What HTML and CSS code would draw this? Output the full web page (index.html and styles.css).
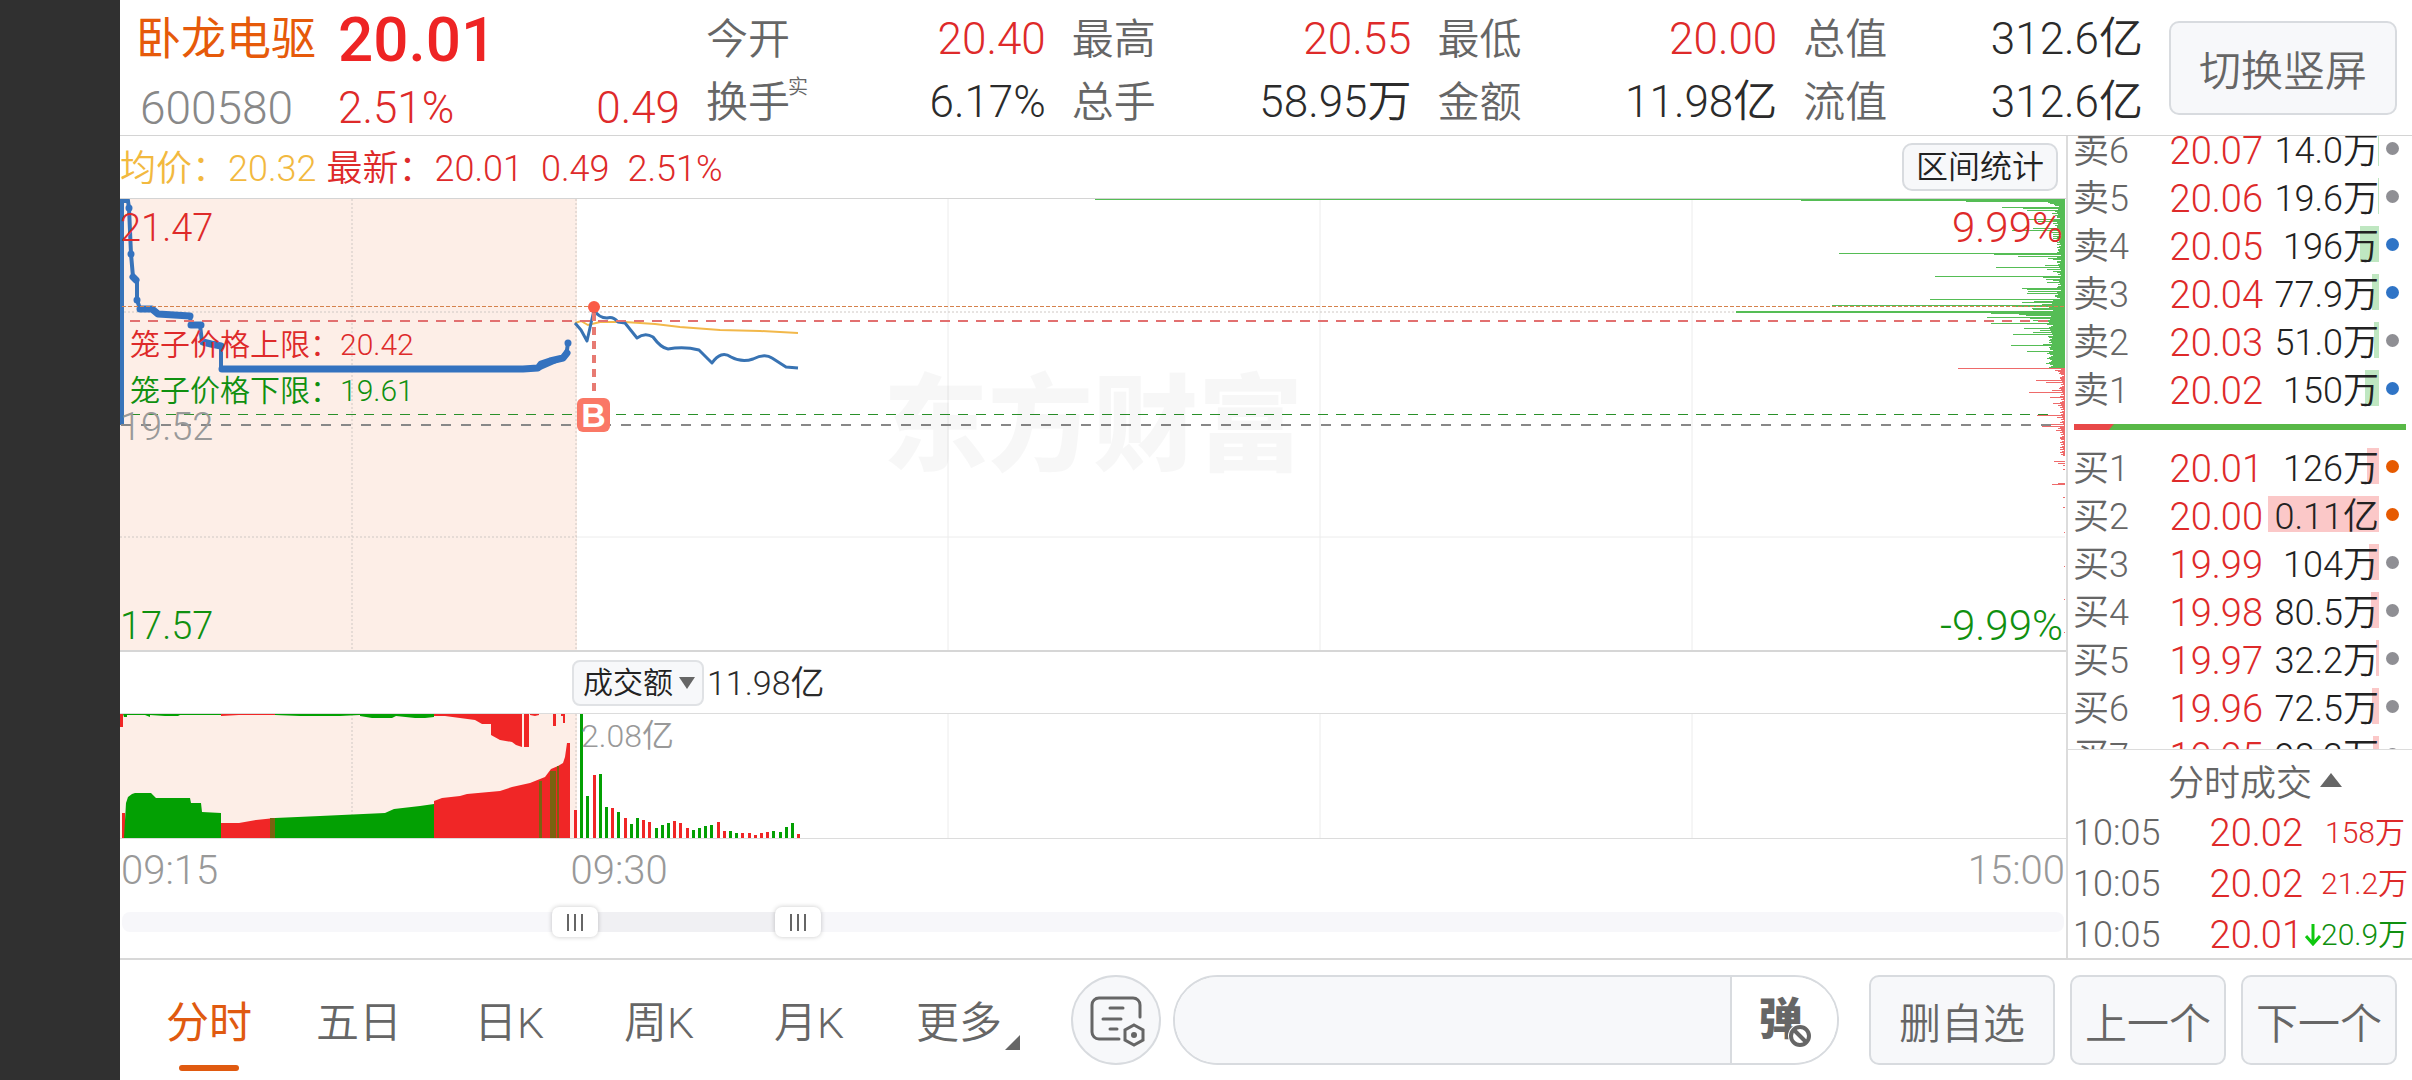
FILE: index.html
```html
<!DOCTYPE html>
<html lang="zh-CN">
<head>
<meta charset="utf-8">
<meta name="viewport" content="width=device-width, initial-scale=1">
<title>卧龙电驱 600580</title>
<link rel="stylesheet" href="styles.css">
</head>
<body>
<div class="app">
  <header class="header">
    <div class="quote">
      <h1 class="quote-name">卧龙电驱</h1>
      <strong class="quote-price">20.01</strong>
      <span class="quote-code">600580</span>
      <span class="quote-change"><span>2.51%</span><span>0.49</span></span>
    </div>
    <dl class="stats">
      <div class="stat"><dt>今开</dt><dd class="up">20.40</dd></div>
      <div class="stat"><dt>最高</dt><dd class="up">20.55</dd></div>
      <div class="stat"><dt>最低</dt><dd class="up">20.00</dd></div>
      <div class="stat"><dt>总值</dt><dd>312.6亿</dd></div>
      <div class="stat"><dt>换手<sup>实</sup></dt><dd>6.17%</dd></div>
      <div class="stat"><dt>总手</dt><dd>58.95万</dd></div>
      <div class="stat"><dt>金额</dt><dd>11.98亿</dd></div>
      <div class="stat"><dt>流值</dt><dd>312.6亿</dd></div>
    </dl>
    <button class="btn btn-rotate" type="button">切换竖屏</button>
  </header>

  <div class="content">
    <main class="charts">
      <div class="legend">
        <span class="avg">均价：20.32</span>
        <span class="up">最新：20.01</span>
        <span class="up gap">0.49</span>
        <span class="up gap">2.51%</span>
        <button class="btn btn-range" type="button">区间统计</button>
      </div>

      <section class="price-chart" aria-label="分时走势">
        <div class="watermark" aria-hidden="true">东方财富</div>
        <span class="trade-mark">B</span>
        <svg class="plot" viewBox="120 199 1946 451" preserveAspectRatio="none" aria-hidden="true">
          <rect class="auction" x="120" y="199" width="457" height="451"/>
          <path class="grid-solid" d="M948 199V650M1320 199V650M1692 199V650M577 537H2065"/>
          <path class="grid-dot" d="M352 199V650M576 199V650M120 312H2065M120 537H577"/>
          <path class="line-avg" d="M575 323L581 321L588 325L600 322L625 322L655 324L680 327L720 330L760 331L798 333"/>
          <path class="line-price" d="M575 323L581 330L587 341L594 310Q599 318 607 318Q613 316 618 322L625 323L637 338Q645 332 653 337Q661 348 668 349Q684 346 699 350L712 363Q721 350 731 357Q742 363 753 359Q765 353 772 358L786 367L798 368"/>
          <path class="auction-line" d="M122 425V201H128L129 208L131 254L133 277L137 280V300L140 309L152 309L158 314L190 316L191 325H200L202 342L221 346V369H538L563 358L567 350L568 343"/>
          <path class="auction-dots" d="M129 208h0M131 254h0M133 277l3 3M137 300h0M140 309h12l6 5l32 2M191 325h10M203 342l8 2l10 2M222 369H523L538 368L541 364L550 361L563 358L567 353M568 343h0"/>
          <g id="depth"></g>
          <path class="dash-hold" d="M122 306.5H2065"/>
          <path class="dash-upper" d="M130 321H2048"/>
          <path class="dash-lower" d="M130 414.5H2048"/>
          <path class="dash-close" d="M121 425H2051"/>
          <path class="dash-mark" d="M594 313V397"/>
          <circle class="mark-dot" cx="594" cy="307" r="6"/>
        </svg>
        <span class="axis axis-top up">21.47</span>
        <span class="axis axis-mid">19.52</span>
        <span class="axis axis-bottom down">17.57</span>
        <span class="axis axis-top axis-right up">9.99%</span>
        <span class="axis axis-bottom axis-right down">-9.99%</span>
        <span class="cage cage-upper up">笼子价格上限：20.42</span>
        <span class="cage cage-lower down">笼子价格下限：19.61</span>
      </section>

      <div class="volume-head">
        <div class="volume-tools">
          <label class="picker"><select aria-label="指标"><option>成交额</option></select></label>
          <span class="volume-total">11.98亿</span>
        </div>
      </div>

      <section class="volume-chart" aria-label="成交额">
        <svg class="plot" viewBox="120 714 1946 124" preserveAspectRatio="none" aria-hidden="true">
          <rect class="auction" x="120" y="714" width="457" height="124"/>
          <path class="grid-solid" d="M948 714V838M1320 714V838M1692 714V838"/>
          <path class="grid-dot" d="M352 714V838M576 714V838"/>
          <path class="vol-up" d="M120 714h3v13h-3zM221 714H275V715H239L221 716zM434 714H524V747H522L516 745L512 742L500 740L491 735V724H482L475 720L460 718L445 716H434zM524 714h5v33h-5zM530 714h9v1l-4 1l-5 -1zM553 714h3v12h-3zM561 714h4v9h-2v-7h-2z"/>
          <path class="vol-down" d="M123 714H221V715H180L178 716H165L150 715V717L145 715H127V717H124zM275 714H434V717L425 718H415L396 716L392 718H372L360 716V715L340 716H300L275 715z"/>
          <path class="vol-gap" d="M522 714h2v34h-2z"/>
          <path class="vol-up" d="M122 813h3v25h-3zM221 838V823H239L256 820L275 818V838zM434 838V801L442 798L460 796L467 794L500 791L512 787L530 783L545 777L551 769L558 766L563 763L565 757L567 743H570V838z"/>
          <path class="vol-down" d="M124 838L126 803L128 797L132 794L135 793H151L156 798H190L191 803H201L202 812L221 813V838zM275 838V818L320 816L385 813L394 809L420 806L434 804V838z"/>
          <path class="vol-mixed" d="M270 818h5v20h-5zM539 781h3v57h-3zM550 771h6v67h-6zM557 766h2v72h-2z"/>
          <g id="volume"></g>
        </svg>
        <span class="volume-max">2.08亿</span>
      </section>

      <div class="times"><span>09:15</span><span>09:30</span><span>15:00</span></div>

      <div class="zoom-range">
        <div class="zoom-track"></div>
        <input type="range" min="0" max="1896" value="430" aria-label="起始时间">
        <input type="range" min="0" max="1896" value="653" aria-label="结束时间">
      </div>
    </main>

    <aside class="book">
      <div class="book-quotes">
        <div class="sells">
          <table class="levels">
            <tr><th scope="row">卖6</th><td class="price">20.07</td><td class="size"><i style="width:1px"></i><b>14.0万</b></td><td class="dot"></td></tr>
            <tr><th scope="row">卖5</th><td class="price">20.06</td><td class="size"><i style="width:1px"></i><b>19.6万</b></td><td class="dot"></td></tr>
            <tr><th scope="row">卖4</th><td class="price">20.05</td><td class="size"><i style="width:19px"></i><b>196万</b></td><td class="dot blue"></td></tr>
            <tr><th scope="row">卖3</th><td class="price">20.04</td><td class="size"><i style="width:7px"></i><b>77.9万</b></td><td class="dot blue"></td></tr>
            <tr><th scope="row">卖2</th><td class="price">20.03</td><td class="size"><i style="width:5px"></i><b>51.0万</b></td><td class="dot"></td></tr>
            <tr><th scope="row">卖1</th><td class="price">20.02</td><td class="size"><i style="width:14px"></i><b>150万</b></td><td class="dot blue"></td></tr>
          </table>
        </div>
        <div class="ratio"><span style="width:12%"></span></div>
        <table class="levels buys">
          <tr><th scope="row">买1</th><td class="price">20.01</td><td class="size"><i style="width:12px"></i><b>126万</b></td><td class="dot orange"></td></tr>
          <tr><th scope="row">买2</th><td class="price">20.00</td><td class="size"><i style="width:111px"></i><b>0.11亿</b></td><td class="dot orange"></td></tr>
          <tr><th scope="row">买3</th><td class="price">19.99</td><td class="size"><i style="width:10px"></i><b>104万</b></td><td class="dot"></td></tr>
          <tr><th scope="row">买4</th><td class="price">19.98</td><td class="size"><i style="width:8px"></i><b>80.5万</b></td><td class="dot"></td></tr>
          <tr><th scope="row">买5</th><td class="price">19.97</td><td class="size"><i style="width:3px"></i><b>32.2万</b></td><td class="dot"></td></tr>
          <tr><th scope="row">买6</th><td class="price">19.96</td><td class="size"><i style="width:7px"></i><b>72.5万</b></td><td class="dot"></td></tr>
          <tr><th scope="row">买7</th><td class="price">19.95</td><td class="size"><i style="width:6px"></i><b>98.2万</b></td><td class="dot"></td></tr>
        </table>
      </div>
      <button class="trades-title" type="button">分时成交<svg width="22" height="14" viewBox="0 0 22 14" aria-hidden="true"><path d="M11 0L22 14H0z"/></svg></button>
      <table class="trades">
        <tr><th scope="row">10:05</th><td class="price">20.02</td><td class="arrow"></td><td class="amount">158万</td></tr>
        <tr><th scope="row">10:05</th><td class="price">20.02</td><td class="arrow"></td><td class="amount">21.2万</td></tr>
        <tr><th scope="row">10:05</th><td class="price">20.01</td><td class="arrow"><svg width="16" height="22" viewBox="0 0 16 22" aria-label="下跌"><path d="M8 0V19M1 12L8 20L15 12"/></svg></td><td class="amount down">20.9万</td></tr>
      </table>
    </aside>
  </div>

  <footer class="footer">
    <nav class="tabs">
      <a class="tab active" href="#fs">分时</a>
      <a class="tab" href="#d5">五日</a>
      <a class="tab" href="#dk">日K</a>
      <a class="tab" href="#wk">周K</a>
      <a class="tab" href="#mk">月K</a>
      <a class="tab more" href="#more">更多</a>
    </nav>
    <button class="btn btn-note" type="button" aria-label="笔记设置">
      <svg width="60" height="56" viewBox="0 0 60 56" aria-hidden="true">
        <path d="M54 25V13a7 7 0 0 0-7-7H13a7 7 0 0 0-7 7V40a7 7 0 0 0 7 7H33"/>
        <path d="M24 16H37M17 27H35M24 37H31"/>
        <path d="M48 33L57 38V48L48 53L39 48V38z"/>
        <circle cx="48" cy="43" r="3"/>
      </svg>
    </button>
    <div class="danmu">
      <input type="text" aria-label="发弹幕">
      <button type="button" aria-label="关闭弹幕"><span>弹</span>
        <svg width="24" height="24" viewBox="0 0 24 24" aria-hidden="true"><circle class="halo" cx="12" cy="12" r="11"/><circle cx="12" cy="12" r="9"/><path d="M6 6L18 18"/></svg>
      </button>
    </div>
    <div class="actions">
      <button class="btn btn-wide" type="button">删自选</button>
      <button class="btn" type="button">上一个</button>
      <button class="btn" type="button">下一个</button>
    </div>
  </footer>
</div>
<script src="chart.js"></script>
</body>
</html>
```
FILE: styles.css
```css
* { box-sizing: border-box; }

body {
  margin: 0;
  background: #303030;
  color: #2b2b2b;
  font-family: Roboto, "Noto Sans CJK SC", sans-serif;
  font-weight: 350;
}

h1, dl, dd { margin: 0; font-weight: inherit; }
table { border-collapse: collapse; table-layout: fixed; }
th, td { padding: 0; font-weight: inherit; white-space: nowrap; }
button, input, select { font: inherit; color: inherit; }

.app {
  min-height: 100vh;
  margin-left: 120px;
  background: #fff;
  display: flex;
  flex-direction: column;
}

.up { color: #de2a2a; }
.down { color: #109010; }

.btn {
  border: 2px solid #d8dbdf;
  border-radius: 10px;
  background: #f7f8fa;
  color: #666;
  padding: 0;
  white-space: nowrap;
}

/* header */
.header {
  display: flex;
  align-items: center;
  height: 136px;
  padding: 0 15px 0 16px;
  border-bottom: 1px solid #d4d4d4;
}
.quote {
  flex: 0 0 544px;
  display: grid;
  grid-template-columns: 202px 1fr;
  grid-template-rows: 80px 56px;
  align-items: center;
  align-self: flex-start;
}
.quote-name { font-size: 45px; line-height: 72px; font-weight: 400; color: #e65a0a; }
.quote-price { font-size: 62px; line-height: 80px; font-weight: 500; color: #ee2424; }
.quote-code { font-size: 46px; line-height: 56px; color: #888; padding-left: 4px; }
.quote-change { display: flex; justify-content: space-between; font-size: 44px; line-height: 56px; color: #de2a2a; }

.stats {
  flex: 1;
  display: grid;
  grid-template-columns: repeat(4, 1fr);
  column-gap: 26px;
  margin-left: 26px;
  margin-right: 26px;
  padding-top: 6px;
}
.stat { display: flex; justify-content: space-between; font-size: 42px; line-height: 63px; }
.stat dt { color: #666; position: relative; }
.stat dd { font-size: 44px; }
.stat sup { position: absolute; left: 82px; top: 0; font-size: 20px; line-height: 32px; }
.btn-rotate { width: 228px; height: 94px; font-size: 42px; }

/* content */
.content { display: flex; flex: 1; min-height: 822px; }
.charts { flex: 1; min-width: 0; }
.book { flex: 0 0 346px; border-left: 2px solid #dcdcdc; display: flex; flex-direction: column; }

.legend {
  display: flex;
  align-items: center;
  height: 63px;
  padding: 0 8px 0 0;
  font-size: 36px;
  line-height: 60px;
  border-bottom: 1px solid #d4d4d4;
}
.legend span { padding-top: 4px; }
.avg { color: #f2b93f; margin-right: 10px; }
.gap { margin-left: 18px; }
.btn-range { margin-left: auto; width: 156px; height: 48px; font-size: 32px; line-height: 44px; color: #222; }

.plot { display: block; width: 100%; height: 100%; position: relative; }
.plot path { fill: none; }
.plot .auction { fill: #fdeee7; }
.plot .grid-solid { stroke: #ececec; stroke-width: 1; }
.plot .grid-dot { stroke: #cfc8c4; stroke-width: 1; stroke-dasharray: 2 2; }

.price-chart { position: relative; height: 451px; }
.watermark {
  position: absolute;
  inset: 4px 0 0 0;
  z-index: 1;
  display: flex;
  align-items: center;
  justify-content: center;
  font-size: 105px;
  line-height: 120px;
  font-weight: 900;
  color: rgba(0, 0, 0, 0.03);
}
.trade-mark {
  position: absolute;
  left: 457px;
  top: 199px;
  z-index: 1;
  width: 33px;
  height: 34px;
  border-radius: 6px;
  background: #fa7866;
  color: #fff;
  font-family: "Liberation Sans", sans-serif;
  font-size: 34px;
  line-height: 34px;
  font-weight: 700;
  text-align: center;
}
.plot .line-avg { stroke: #f2b84a; stroke-width: 2; }
.plot .line-price { stroke: #3873b3; stroke-width: 3; stroke-linejoin: round; }
.plot .auction-line { stroke: #3873b9; stroke-width: 4; }
.plot .auction-dots { stroke: #3472bf; stroke-width: 7; stroke-linecap: round; stroke-linejoin: round; }
.plot .dash-hold { stroke: #d5824d; stroke-width: 1; stroke-dasharray: 4 2; }
.plot .dash-upper { stroke: #e27070; stroke-width: 2; stroke-dasharray: 10 8; }
.plot .dash-lower { stroke: #2a902a; stroke-width: 1; stroke-dasharray: 10 8; }
.plot .dash-close { stroke: #888; stroke-width: 2; stroke-dasharray: 10 10; }
.plot .dash-mark { stroke: #e77a72; stroke-width: 4; stroke-dasharray: 8 6; }
.mark-dot { fill: #fa5a46; }
.plot .sell-depth { stroke: #55bd55; stroke-width: 1; }
.plot .buy-depth { stroke: #ee6a6a; stroke-width: 1; }

.axis, .cage, .volume-max { position: absolute; z-index: 2; }
.axis { left: 0; font-size: 38px; line-height: 48px; }
.axis-top { top: 5px; }
.axis-mid { top: 204px; color: #999; }
.axis-bottom { bottom: 0; }
.axis-right { left: auto; right: 3px; font-size: 42px; }
.cage { left: 10px; font-size: 30px; line-height: 40px; }
.cage-upper { top: 126px; }
.cage-lower { top: 172px; }

.volume-head {
  height: 64px;
  display: grid;
  grid-template-columns: 452fr 1494fr;
  align-items: center;
  border-top: 2px solid #d6d6d6;
  border-bottom: 1px solid #dcdcdc;
}
.volume-tools { grid-column: 2; display: flex; align-items: center; gap: 3px; }
.picker { position: relative; display: block; }
.picker::after {
  content: "";
  position: absolute;
  right: 9px;
  top: 17px;
  border: 8px solid transparent;
  border-top: 12px solid #666;
  border-bottom: 0;
}
.picker select {
  display: block;
  appearance: none;
  width: 132px;
  height: 46px;
  padding: 0 0 0 9px;
  border: 2px solid #e0e2e5;
  border-radius: 8px;
  background: #f7f8fa;
  font-size: 30px;
  color: #222;
}
.volume-total { font-size: 34px; line-height: 48px; }
.volume-chart { position: relative; height: 125px; border-bottom: 1px solid #dcdcdc; }
.plot .vol-up { fill: #f02626; }
.plot .vol-down { fill: #03a003; }
.plot .vol-gap { fill: #fdeee7; }
.plot .vol-mixed { fill: #7a6210; }
.volume-max { left: 461px; top: 2px; font-size: 32px; line-height: 40px; color: #999; }

.times {
  display: grid;
  grid-template-columns: 450fr 1000fr 496fr;
  height: 62px;
  padding: 0 1px;
  font-size: 40px;
  line-height: 64px;
  color: #999;
}
.times span:last-child { text-align: right; }

.zoom-range { position: relative; height: 46px; margin: 0 2px; }
.zoom-track {
  position: absolute;
  left: 0;
  right: 0;
  top: 11px;
  height: 20px;
  border-radius: 8px;
  background: linear-gradient(to right, #f7f7fa 24%, #f0f0f3 24%, #f0f0f3 34%, #f7f7fa 34%);
}
.zoom-range input {
  position: absolute;
  left: 0;
  top: 6px;
  width: 100%;
  height: 30px;
  margin: 0;
  appearance: none;
  background: none;
  pointer-events: none;
}
.zoom-range input::-webkit-slider-thumb {
  appearance: none;
  pointer-events: auto;
  width: 46px;
  height: 30px;
  border-radius: 7px;
  box-shadow: 0 0 5px rgba(0, 0, 0, 0.22);
  background:
    linear-gradient(#666, #666) 15px 7px / 2px 17px no-repeat,
    linear-gradient(#666, #666) 22px 7px / 2px 17px no-repeat,
    linear-gradient(#666, #666) 29px 7px / 2px 17px no-repeat,
    #fff;
}

/* order book */
.book-quotes { flex: none; height: 613px; overflow: hidden; }
.sells { height: 276px; display: flex; flex-direction: column; justify-content: flex-end; overflow: hidden; }
.levels { width: 332px; margin-left: 5px; flex: none; font-size: 36px; line-height: 40px; }
.levels tr { height: 48px; }
.levels th { width: 61px; text-align: left; color: #666; }
.levels th, .levels .price, .levels .size { padding-top: 6px; }
.levels .price { width: 129px; text-align: right; color: #de2a2a; font-size: 38px; }
.levels .size { width: 116px; text-align: right; position: relative; color: #222; }
.levels b { position: relative; font-weight: inherit; }
.levels i { position: absolute; right: 0; top: 6px; height: 36px; background: #bfe7c1; }
.levels .dot { width: 26px; }
.dot::before {
  content: "";
  display: block;
  width: 13px;
  height: 13px;
  margin: 0 auto;
  border-radius: 50%;
  background: #8f8f94;
}
.dot.blue::before { background: #2f74c6; }
.dot.orange::before { background: #e65a00; }
.ratio { height: 6px; margin: 12px 6px; background: #58b847; }
.ratio span { display: block; height: 6px; background: #e84848; clip-path: polygon(0 0, 100% 0, calc(100% - 5px) 100%, 0 100%); }
.buys i { background: #fbc8c8; }

.trades-title {
  flex: none;
  height: 57px;
  border: 0;
  border-top: 1px solid #dcdcdc;
  background: none;
  padding: 4px 0 0 30px;
  display: flex;
  align-items: center;
  justify-content: center;
  gap: 8px;
  font-size: 36px;
  color: #666;
}
.trades-title svg { fill: #666; }
.trades { flex: none; width: 332px; height: 152px; margin-left: 5px; font-size: 36px; line-height: 40px; }
.trades th, .trades td { padding-top: 4px; }
.trades th { width: 96px; text-align: left; color: #666; }
.trades td { text-align: right; color: #de2a2a; }
.trades .price { width: 134px; font-size: 38px; }
.trades .arrow { width: 18px; }
.trades .arrow svg { display: block; fill: none; stroke: #0fc80f; stroke-width: 3; margin-left: 2px; }
.trades .amount { width: 84px; font-size: 30px; }
.trades .down { color: #109010; }

/* footer */
.footer {
  display: flex;
  align-items: center;
  height: 122px;
  padding: 0 15px 0 14px;
  border-top: 2px solid #d8d8d8;
}
.tabs { flex: 0 1 900px; display: flex; }
.tab {
  flex: 1;
  position: relative;
  padding-top: 6px;
  text-align: center;
  font-size: 43px;
  line-height: 90px;
  color: #666;
  text-decoration: none;
}
.active { color: #e05a10; font-weight: 400; }
.active::after {
  content: "";
  position: absolute;
  left: 50%;
  bottom: -3px;
  width: 60px;
  height: 6px;
  margin-left: -30px;
  border-radius: 3px;
  background: #e05a10;
}
.more::after {
  content: "";
  position: absolute;
  right: 14px;
  bottom: 18px;
  border-left: 15px solid transparent;
  border-bottom: 15px solid #666;
}
.btn-note {
  width: 90px;
  height: 90px;
  margin-left: 37px;
  border-radius: 50%;
  display: flex;
  align-items: center;
  justify-content: center;
}
.btn-note svg { fill: none; stroke: #666; stroke-width: 3; stroke-linecap: round; flex: none; }
.btn-note circle { fill: #666; stroke: none; }
.danmu {
  flex: 1;
  min-width: 0;
  display: flex;
  height: 90px;
  margin: 0 30px 0 12px;
  border: 2px solid #d8dbdf;
  border-radius: 45px;
  overflow: hidden;
}
.danmu input { flex: 1; min-width: 0; border: 0; padding: 0 40px; background: #f7f8fa; font-size: 36px; }
.danmu button {
  position: relative;
  width: 107px;
  border: 0;
  border-left: 2px solid #d8dbdf;
  padding: 0 8px 0 0;
  background: #fff;
  color: #666;
  font-size: 44px;
  line-height: 80px;
  font-weight: 900;
}
.danmu svg { position: absolute; right: 25px; bottom: 15px; fill: none; stroke: #666; stroke-width: 4; }
.danmu .halo { fill: #fff; stroke: #fff; stroke-width: 2; }
.actions { display: flex; gap: 15px; }
.actions .btn { width: 156px; height: 90px; font-size: 42px; }
.actions .btn-wide { width: 186px; }
```
FILE: chart.js
```javascript
const NS = "http://www.w3.org/2000/svg";

function addPath(parent, className, d) {
  const path = document.createElementNS(NS, "path");
  path.setAttribute("class", className);
  path.setAttribute("d", d);
  parent.appendChild(path);
}

// Held volume per price level: [level, bar length], both in thirds of a unit.
const sellDepth = [
  [1, 2910], [4, 792], [7, 298], [10, 50], [13, 45], [16, 32], [19, 30], [24, 190], [28, 127], [32, 113],
  [36, 30], [41, 40], [47, 30], [52, 25], [59, 113], [63, 40], [66, 80], [72, 35], [77, 30], [80, 24],
  [86, 95], [93, 158], [98, 45], [104, 35], [110, 35], [116, 35], [123, 27], [130, 20], [135, 25],
  [145, 10], [154, 20], [162, 678], [166, 213], [170, 140], [176, 50], [181, 35], [186, 25], [192, 10],
  [198, 60], [204, 208], [210, 53], [215, 35], [222, 10], [231, 390], [235, 65], [239, 57], [243, 35],
  [248, 55], [255, 15], [260, 20], [266, 129], [271, 113], [277, 110], [282, 114], [287, 30], [292, 30],
  [301, 404], [305, 93], [309, 130], [314, 68], [318, 699], [322, 150], [326, 100], [331, 97], [335, 987],
  [338, 987], [341, 222], [344, 138], [348, 118], [353, 234], [357, 105], [362, 95], [366, 55], [371, 223],
  [375, 55], [381, 40], [387, 123], [392, 75], [398, 97], [405, 155], [410, 50], [416, 35], [423, 47],
  [429, 35], [435, 65], [439, 162], [446, 45], [451, 27], [456, 113], [463, 55], [469, 35], [477, 55],
  [483, 40], [491, 57], [497, 35], [503, 40]
];
const buyDepth = [
  [508, 322], [512, 30], [517, 22], [523, 17], [530, 10], [537, 15], [543, 86], [550, 57], [556, 10],
  [562, 10], [567, 18], [573, 38], [578, 109], [584, 10], [590, 15], [595, 44], [601, 10], [612, 35],
  [618, 20], [624, 10], [630, 7], [647, 84], [653, 25], [660, 10], [668, 10], [675, 70], [681, 70],
  [687, 20], [692, 27], [700, 5], [716, 15], [733, 5], [750, 15], [768, 7], [786, 33], [791, 20],
  [797, 5], [810, 7], [851, 20], [854, 40], [895, 5], [923, 5], [1000, 4], [1100, 3], [1200, 3], [1300, 3]
];

function depthPath(levels, baseFrom, baseTo, baseWidth) {
  const bars = levels.map(([level, length]) => {
    const y = Math.round(199 + level / 3) + 0.5;
    return `M2065 ${y}h${-Math.round(length / 3)}`;
  });
  for (let y = baseFrom; y < baseTo; y += 1) {
    const width = baseWidth + ((y * 7) % 5);
    bars.push(`M2065 ${y + 0.5}h${-width}`);
  }
  return bars.join("");
}

const depth = document.getElementById("depth");
addPath(depth, "sell-depth", depthPath(sellDepth, 199, 368, 4));
addPath(depth, "sell-depth", depthPath([], 300, 368, 12));
addPath(depth, "buy-depth", depthPath(buyDepth, 368, 455, 1));

// Turnover per minute from 09:30: direction and bar height.
const minutes = "r28 g124 g42 r63 g64 g31 r30 g26 r20 g14 g20 r18 r16 g10 g13 g15 r17 r15 r10 g8 g10 g12 g13 " +
  "r16 r7 g7 g5 r5 r5 r3 r5 r6 g7 g6 g11 g15 r4";
let up = "";
let down = "";
minutes.split(" ").forEach((item, i) => {
  const x = Math.round(574 + i * 6.2);
  const height = Number(item.slice(1));
  const bar = `M${x} 838v${-height}h3v${height}z`;
  if (item[0] === "r") up += bar; else down += bar;
});
const volume = document.getElementById("volume");
addPath(volume, "vol-up", up);
addPath(volume, "vol-down", down);
```
